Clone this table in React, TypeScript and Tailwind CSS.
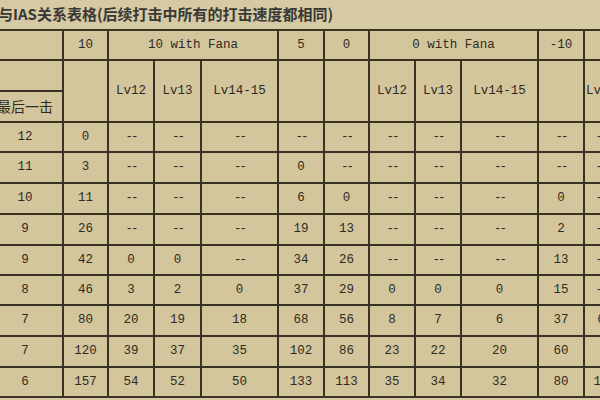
const MONO = "font-['Liberation_Mono','DejaVu_Sans_Mono',monospace]"

const COLS = [
  'w-[76px]', 'w-[45px]', 'w-[46px]', 'w-[47px]', 'w-[77px]', 'w-[46px]',
  'w-[45px]', 'w-[46px]', 'w-[46px]', 'w-[77px]', 'w-[46px]', 'w-[34px]',
]

const ROWS: { h: string; cells: string[] }[] = [
  { h: 'h-[30px]', cells: ['12', '0', '--', '--', '--', '--', '--', '--', '--', '--', '--', '--'] },
  { h: 'h-[31px]', cells: ['11', '3', '--', '--', '--', '0', '--', '--', '--', '--', '--', '--'] },
  { h: 'h-[31px]', cells: ['10', '11', '--', '--', '--', '6', '0', '--', '--', '--', '0', '--'] },
  { h: 'h-[31px]', cells: ['9', '26', '--', '--', '--', '19', '13', '--', '--', '--', '2', '--'] },
  { h: 'h-[30px]', cells: ['9', '42', '0', '0', '--', '34', '26', '--', '--', '--', '13', '--'] },
  { h: 'h-[30px]', cells: ['8', '46', '3', '2', '0', '37', '29', '0', '0', '0', '15', '--'] },
  { h: 'h-[31px]', cells: ['7', '80', '20', '19', '18', '68', '56', '8', '7', '6', '37', '6'] },
  { h: 'h-[31px]', cells: ['7', '120', '39', '37', '35', '102', '86', '23', '22', '20', '60', ''] },
  { h: 'h-[30px]', cells: ['6', '157', '54', '52', '50', '133', '113', '35', '34', '32', '80', '14'] },
]

const td = 'border-2 border-[#3a3324] text-center align-middle p-0 whitespace-nowrap'

export default function App() {
  return (
    <div className="w-[600px] h-[400px] overflow-hidden bg-[#d5caa3] text-[#2f2b24]">
      <div className="h-[29px] flex items-center -ml-[2px] text-[15px] font-bold text-[#3a3835] font-['Noto_Sans_CJK_SC','Noto_Sans',sans-serif]">
        与IAS关系表格(后续打击中所有的打击速度都相同)
      </div>
      <table className={`w-[631px] -ml-[14px] border-collapse table-fixed bg-[#d3c69c] text-[12.5px] ${MONO}`}>
        <colgroup>
          {COLS.map((c, i) => <col key={i} className={c} />)}
        </colgroup>
        <tbody>
          <tr className="h-[30px]">
            <td className={td}></td>
            <td className={td}>10</td>
            <td className={td} colSpan={3}>10 with Fana</td>
            <td className={td}>5</td>
            <td className={td}>0</td>
            <td className={td} colSpan={3}>0 with Fana</td>
            <td className={td}>-10</td>
            <td className={td}></td>
          </tr>
          <tr className="h-[31px]">
            <td className={td}></td>
            <td className={td} rowSpan={2}></td>
            <td className={td} rowSpan={2}>Lv12</td>
            <td className={td} rowSpan={2}>Lv13</td>
            <td className={td} rowSpan={2}>Lv14-15</td>
            <td className={td} rowSpan={2}></td>
            <td className={td} rowSpan={2}></td>
            <td className={td} rowSpan={2}>Lv12</td>
            <td className={td} rowSpan={2}>Lv13</td>
            <td className={td} rowSpan={2}>Lv14-15</td>
            <td className={td} rowSpan={2}></td>
            <td className={td} rowSpan={2}>Lv12</td>
          </tr>
          <tr className="h-[31px]">
            <td className={`${td} text-[14px] font-['Noto_Sans_CJK_SC',sans-serif]`}>最后一击</td>
          </tr>
          {ROWS.map((r, i) => (
            <tr key={i} className={r.h}>
              {r.cells.map((c, j) => (
                <td key={j} className={`${td} ${c === '--' ? 'tracking-[-2px]' : ''}`}>{c}</td>
              ))}
            </tr>
          ))}
        </tbody>
      </table>
    </div>
  )
}
